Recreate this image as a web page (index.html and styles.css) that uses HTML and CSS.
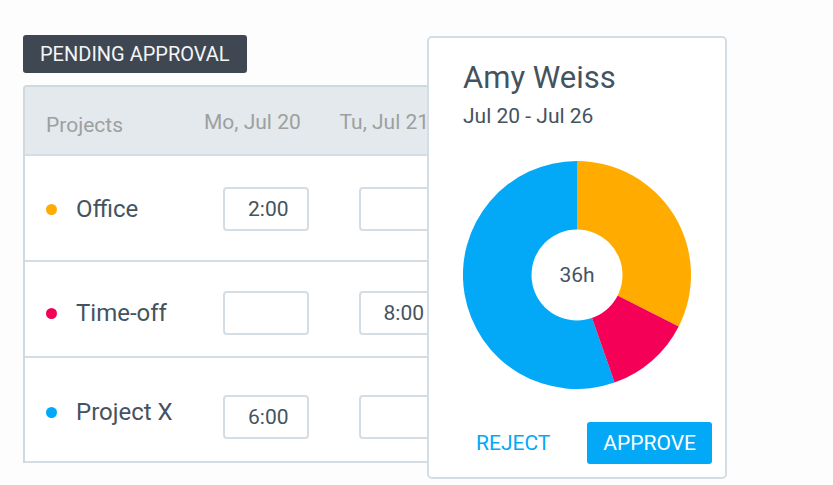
FILE: index.html
```html
<!DOCTYPE html>
<html lang="en">
<head>
<meta charset="utf-8">
<meta name="viewport" content="width=device-width, initial-scale=1">
<title>Pending approval</title>
<link rel="stylesheet" href="styles.css">
</head>
<body>
<main class="page">
  <section class="sheet">
    <h1 class="badge">PENDING APPROVAL</h1>
    <div class="table-frame">
      <table class="timesheet">
        <colgroup><col class="col-project"><col class="col-day"><col class="col-day"></colgroup>
        <thead>
          <tr><th class="head-project" scope="col">Projects</th><th scope="col">Mo, Jul 20</th><th scope="col">Tu, Jul 21</th></tr>
        </thead>
        <tbody>
          <tr class="row-office">
            <th scope="row"><span class="project"><span class="dot orange"></span>Office</span></th>
            <td><input class="time" type="text" value="2:00" aria-label="Office, Mo, Jul 20"></td>
            <td><input class="time" type="text" aria-label="Office, Tu, Jul 21"></td>
          </tr>
          <tr class="row-timeoff">
            <th scope="row"><span class="project"><span class="dot pink"></span>Time-off</span></th>
            <td><input class="time" type="text" aria-label="Time-off, Mo, Jul 20"></td>
            <td><input class="time" type="text" value="8:00" aria-label="Time-off, Tu, Jul 21"></td>
          </tr>
          <tr class="row-projectx">
            <th scope="row"><span class="project"><span class="dot blue"></span>Project X</span></th>
            <td><input class="time" type="text" value="6:00" aria-label="Project X, Mo, Jul 20"></td>
            <td><input class="time" type="text" aria-label="Project X, Tu, Jul 21"></td>
          </tr>
        </tbody>
      </table>
    </div>
  </section>
  <article class="card">
    <h2 class="name">Amy Weiss</h2>
    <p class="period">Jul 20 - Jul 26</p>
    <div class="chart">
      <svg class="donut" viewBox="-114 -114 228 228" aria-hidden="true">
        <path d="M0 0L37.600 107.600A114 114 0 1 1 0 -114Z" fill="#03a9f7"/>
        <path d="M0 0V-114A114 114 0 0 1 101.700 51.500Z" fill="#ffab00"/>
        <path d="M0 0L101.700 51.500A114 114 0 0 1 37.600 107.600Z" fill="#f50057"/>
        <circle r="45.500" fill="#fff"/>
      </svg>
      <span class="total">36h</span>
    </div>
    <div class="actions">
      <button class="btn reject" type="button">REJECT</button>
      <button class="btn approve" type="button">APPROVE</button>
    </div>
  </article>
</main>
</body>
</html>
```
FILE: styles.css
```css
* {
  box-sizing: border-box;
}

body {
  margin: 0;
  background: #fdfdfd;
  color: #455360;
  font-family: Roboto, "Liberation Sans", sans-serif;
}

.page {
  display: grid;
  grid-template-columns: minmax(0, 1fr) 300px;
  align-items: start;
  padding: 35px 106px 6px 23px;
}

.badge {
  width: fit-content;
  margin: 0 0 12px;
  padding: 0 17px;
  border-radius: 3px;
  background: #3f4852;
  color: #f4f5f6;
  font-size: 20px;
  font-weight: 400;
  line-height: 38px;
}

.table-frame {
  overflow: hidden;
  border: 2px solid #ced9e0;
  border-width: 2px 0 0 2px;
  border-radius: 4px 0 0 0;
  background: #fff;
}

.timesheet {
  width: 444px;
  table-layout: fixed;
  border-collapse: separate;
  border-spacing: 0;
}

.col-project {
  width: 173px;
}

.timesheet th,
.timesheet td {
  padding: 0;
  border-bottom: 2px solid #d3dde3;
  font-weight: 400;
  text-align: left;
  vertical-align: top;
  white-space: nowrap;
}

.timesheet thead th {
  padding: 23px 0 20px 6px;
  background: #e4e9ed;
  color: #9e9fa0;
  font-size: 21px;
  line-height: 24px;
}

.timesheet thead .head-project {
  padding: 26px 0 17px 21px;
}

.timesheet tbody td {
  padding-left: 25px;
}

.row-office > * {
  height: 106px;
}

.row-timeoff > * {
  height: 96px;
}

.row-projectx > * {
  height: 105px;
}

.timesheet .row-office > * {
  padding-top: 31px;
}

.timesheet .row-timeoff > * {
  padding-top: 29px;
}

.timesheet .row-projectx > td {
  padding-top: 37px;
}

.timesheet .row-projectx > th {
  padding-top: 32px;
}

.project {
  display: flex;
  align-items: center;
  gap: 19px;
  padding-left: 21px;
  font-size: 24px;
  line-height: 44px;
}

.dot {
  width: 11px;
  height: 11px;
  border-radius: 50%;
}

.orange {
  background: #ffab00;
}

.pink {
  background: #f50057;
}

.blue {
  background: #03a9f7;
}

.time {
  display: block;
  width: 86px;
  height: 44px;
  padding: 0 0 0 23px;
  border: 2px solid #d3dde3;
  border-radius: 4px;
  background: #fff;
  color: inherit;
  font: 21px Roboto, "Liberation Sans", sans-serif;
}

.card {
  margin-top: 1px;
  padding: 20px 13px 13px 34px;
  border: 2px solid #d3dde3;
  border-radius: 5px;
  background: #fff;
}

.name {
  margin: 0;
  font-size: 31px;
  font-weight: 400;
  line-height: 40px;
}

.period {
  margin: 6px 0 33px;
  font-size: 21px;
  line-height: 24px;
}

.chart {
  display: grid;
  width: 228px;
  place-items: center;
}

.donut,
.total {
  grid-area: 1 / 1;
}

.donut {
  display: block;
  width: 100%;
}

.total {
  font-size: 21px;
}

.actions {
  display: flex;
  justify-content: flex-end;
  gap: 21px;
  margin-top: 33px;
}

.btn {
  padding: 0 16px;
  border: 0;
  border-radius: 3px;
  background: none;
  color: #03a9f7;
  font: 21px/42px Roboto, "Liberation Sans", sans-serif;
}

.approve {
  background: #03a9f7;
  color: #fff;
}
```
